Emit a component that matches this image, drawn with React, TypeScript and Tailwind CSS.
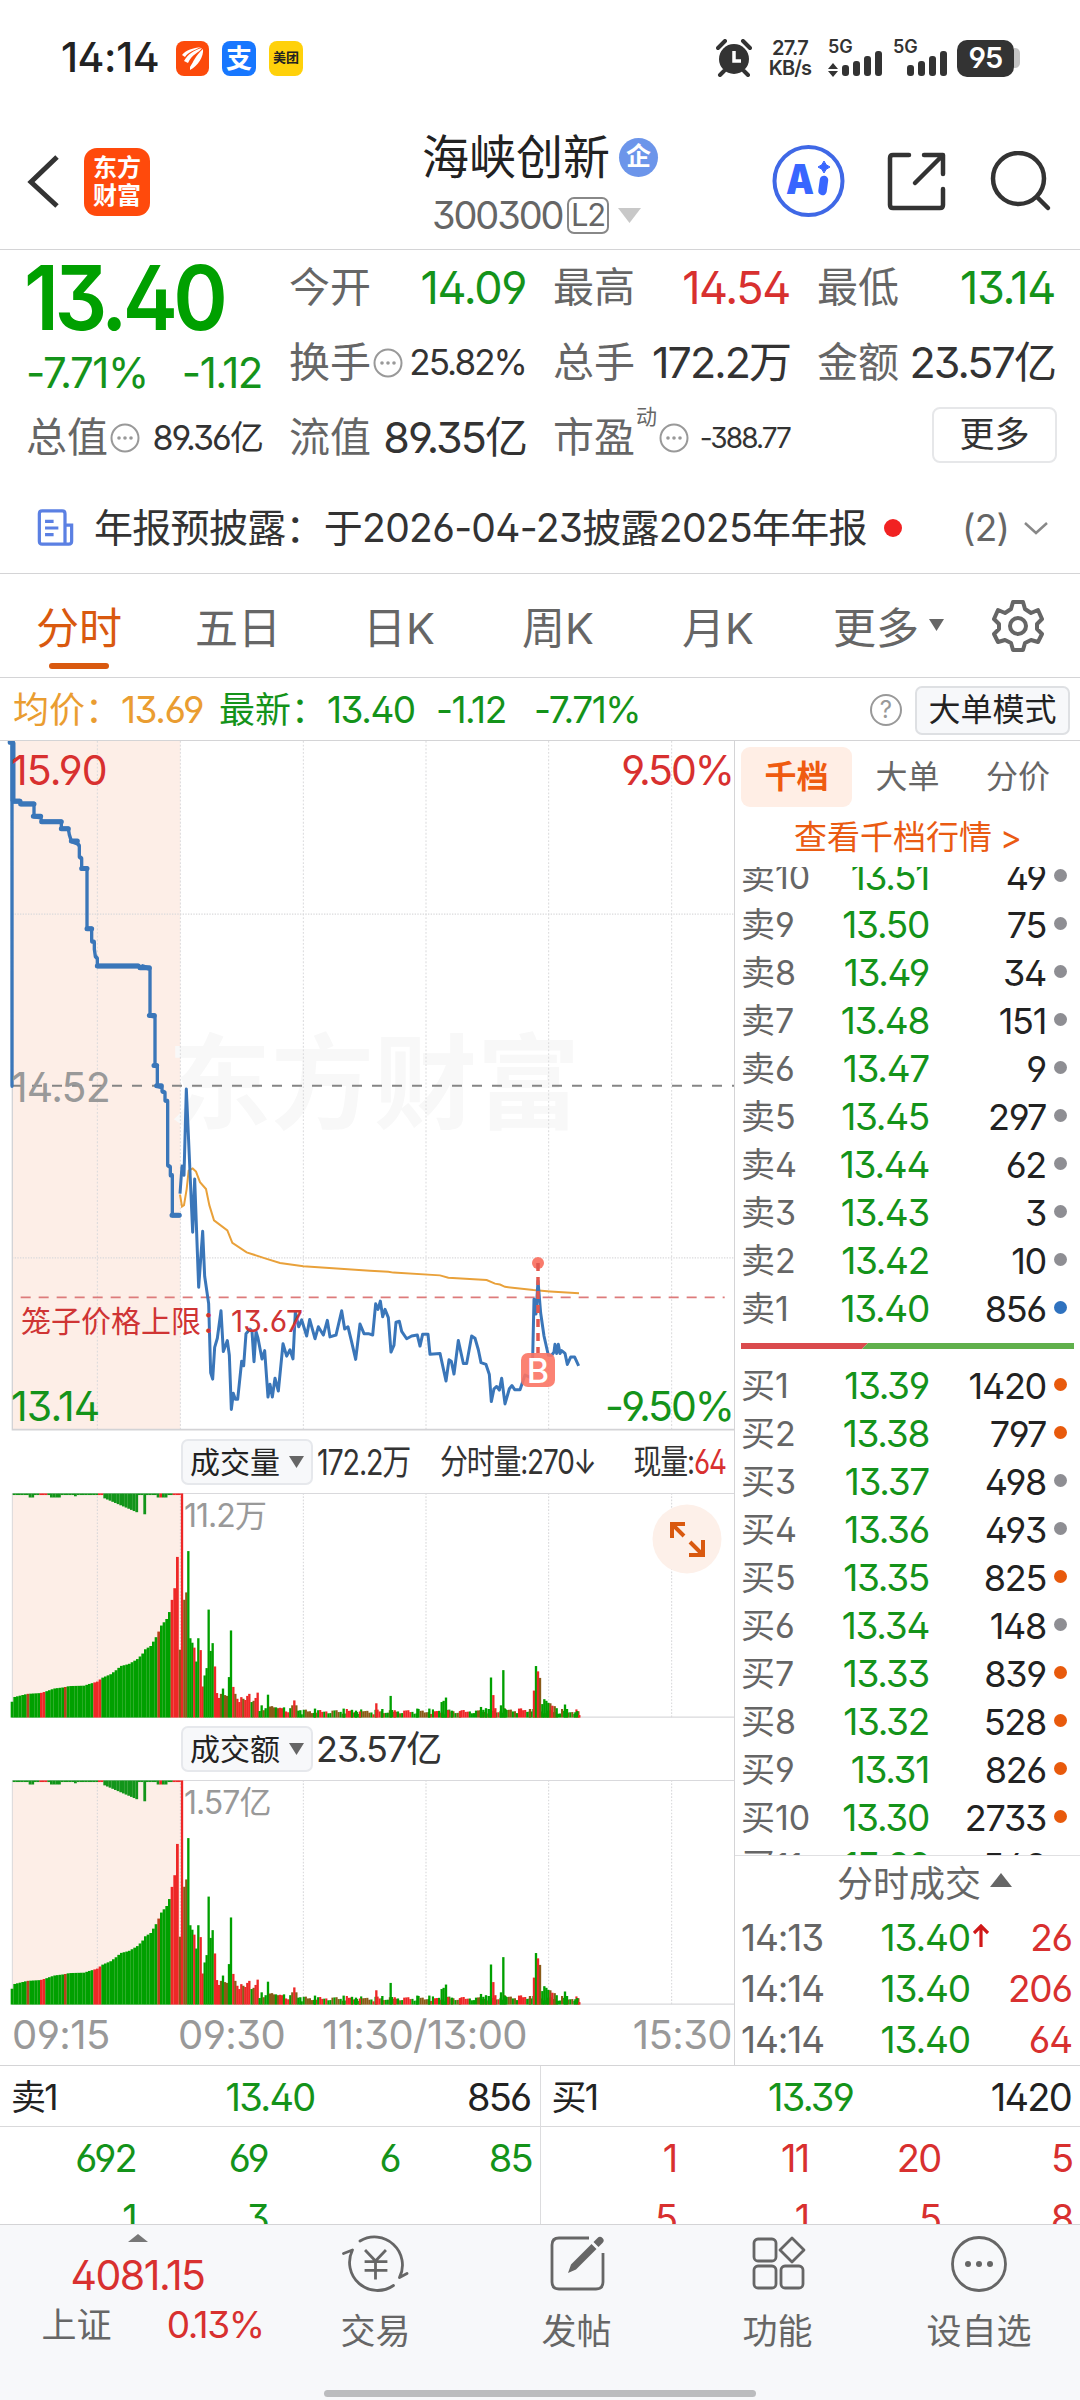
import { ReactNode } from "react";

const NAV_LABEL = "text-[35px] leading-[44px] text-[#666]";

type Row = [string, string, string, string];

const GRAY = "#8e8e93";
const BLUE = "#2f72bf";
const ORANGE = "#e85a0c";

const sells: Row[] = [
    ["卖10", "13.51", "49", GRAY],
    ["卖9", "13.50", "75", GRAY],
    ["卖8", "13.49", "34", GRAY],
    ["卖7", "13.48", "151", GRAY],
    ["卖6", "13.47", "9", GRAY],
    ["卖5", "13.45", "297", GRAY],
    ["卖4", "13.44", "62", GRAY],
    ["卖3", "13.43", "3", GRAY],
    ["卖2", "13.42", "10", GRAY],
    ["卖1", "13.40", "856", BLUE],
];

const buys: Row[] = [
    ["买1", "13.39", "1420", ORANGE],
    ["买2", "13.38", "797", ORANGE],
    ["买3", "13.37", "498", GRAY],
    ["买4", "13.36", "493", GRAY],
    ["买5", "13.35", "825", ORANGE],
    ["买6", "13.34", "148", GRAY],
    ["买7", "13.33", "839", ORANGE],
    ["买8", "13.32", "528", ORANGE],
    ["买9", "13.31", "826", ORANGE],
    ["买10", "13.30", "2733", ORANGE],
    ["买11", "13.29", "548", "transparent"],
];

const ticks = [
    { time: "14:13", price: "13.40", up: true, qty: "26" },
    { time: "14:14", price: "13.40", up: false, qty: "206" },
    { time: "14:14", price: "13.40", up: false, qty: "64" },
];

// Chart space: 3 units per pixel horizontally, top of the pane at y=24
const PREOPEN =
    "M36,775 L36,27 M28,27 L40,27 L40,155 L60,155 L62,161 L102,161 L102,188 L122,190 L125,200 L184,200 L184,215 L205,215 L208,228 L214,242 L232,247 L238,252 L238,276 L245,280 L245,302 L261,302 L261,433 L275,433 L275,460 L283,462 L283,477 L286,493 L292,498 L292,514 L415,514 L420,518 L428,515 L450,520 L450,622 L465,624 L465,731 L472,733 L472,775 L486,778 L486,787 L495,790 L495,807 L503,808 L503,948 L511,952 L511,970 L517,970 L517,1057 L540,1057";
const PREOPEN_STEPS =
    "M40,155 H60 M62,161 H102 M100,188 H122 M125,200 H184 M184,215 H205 M214,242 H232 M245,302 H261 M261,433 H275 M292,514 H415 M420,518 H448 M448,622 H463 M462,731 H470 M470,775 H484 M516,1057 H537";
const PRICE =
    "540,1010 546,950 552,970 559,782 578,1094 584,978 596,1214 608,1092 614,1190 626,1250 632,1400 638,1414 644,1345 652,1325 663,1265 670,1354 682,1330 688,1362 694,1480 700,1445 706,1458 713,1458 725,1375 731,1385 738,1315 750,1305 756,1310 762,1376 768,1310 774,1325 786,1370 794,1352 804,1453 810,1425 817,1453 825,1412 835,1440 849,1337 860,1364 870,1350 879,1370 886,1268 896,1300 905,1285 920,1320 929,1284 945,1326 955,1300 970,1318 982,1286 990,1322 1008,1318 1025,1265 1034,1305 1044,1300 1054,1330 1067,1371 1080,1294 1092,1315 1105,1315 1118,1318 1127,1250 1134,1262 1141,1244 1148,1278 1155,1262 1165,1280 1173,1355 1182,1340 1188,1290 1198,1288 1205,1310 1220,1326 1235,1320 1252,1318 1260,1342 1268,1316 1284,1316 1290,1360 1320,1358 1338,1418 1347,1372 1354,1375 1362,1403 1375,1330 1390,1380 1400,1380 1415,1320 1425,1325 1435,1350 1443,1378 1458,1382 1468,1404 1474,1463 1482,1435 1490,1430 1498,1438 1505,1412 1515,1468 1528,1435 1536,1428 1544,1437 1560,1437 1575,1405 1590,1410 1597,1400 1602,1240 1608,1272 1614,1200 1622,1270 1632,1320 1645,1362 1655,1362 1662,1355 1665,1338 1670,1358 1675,1338 1680,1358 1685,1352 1695,1358 1702,1382 1712,1366 1724,1366 1736,1385";
const AVERAGE =
    "540,1012 546,1038 552,1035 560,1000 566,960 578,955 588,962 600,985 618,1000 628,1035 642,1068 682,1090 697,1117 740,1138 800,1152 840,1161 910,1168 1110,1178 1165,1180 1180,1182 1320,1188 1345,1193 1460,1198 1485,1206 1500,1208 1515,1213 1600,1220 1650,1223 1737,1227";

const G = "#00a000";
const R = "#ee2727";
const M = "#8a5a17";

// [x, top] knots of the call-auction volume ramp
const ramp = [
    [32, 668], [40, 653], [60, 649], [80, 645], [120, 643], [136, 639], [160, 632], [190, 629], [205, 626],
    [250, 625], [265, 621], [290, 615], [304, 606], [330, 597], [345, 588], [360, 577], [385, 572], [410, 560],
    [425, 548], [432, 537], [450, 528], [465, 508], [472, 497], [480, 480], [490, 470], [500, 460], [508, 440],
    [516, 407], [524, 380], [532, 287],
];

// [x, top, colour] for the minutes that stand out from the base level
const spikes: [number, number, string][] = [
    [540, 537, M], [546, 155, R], [553, 415, M], [559, 397, M], [565, 296, G], [571, 509, G], [577, 520, G],
    [583, 532, R], [589, 566, G], [595, 509, G], [602, 538, R], [608, 627, R], [614, 600, G], [620, 582, G],
    [626, 439, G], [632, 540, G], [638, 521, G], [645, 578, R], [651, 643, R], [657, 655, R], [663, 645, M],
    [669, 632, G], [675, 648, M], [681, 650, M], [687, 604, G], [693, 490, G], [700, 628, R], [706, 645, M],
    [712, 657, R], [718, 665, R], [724, 653, R], [730, 657, M], [736, 660, R], [742, 650, R], [748, 645, R],
    [755, 665, G], [761, 662, M], [767, 655, R], [773, 642, R], [779, 687, G], [785, 673, G], [791, 685, M],
    [797, 680, G], [804, 647, G], [810, 676, M], [816, 675, M], [822, 678, M], [828, 678, G], [834, 680, M],
    [840, 679, R], [846, 680, R], [852, 678, G], [858, 688, R], [865, 690, R], [871, 680, G], [877, 673, M],
    [883, 661, R], [889, 673, M], [895, 686, G], [901, 685, G], [945, 681, G], [1031, 681, G], [1056, 684, G],
    [1068, 686, G], [1080, 688, R], [1129, 668, R], [1147, 682, G], [1172, 650, G], [1184, 685, R],
    [1252, 681, G], [1288, 681, G], [1325, 665, G], [1331, 662, G], [1338, 654, G], [1345, 685, R],
    [1356, 686, G], [1380, 687, R], [1443, 677, G], [1450, 684, G], [1458, 680, G], [1466, 682, G],
    [1473, 605, G], [1480, 648, R], [1486, 680, R], [1503, 673, G], [1510, 587, G], [1516, 682, G],
    [1590, 682, M], [1602, 637, R], [1608, 577, G], [1614, 590, R], [1620, 606, M], [1627, 670, G],
    [1633, 658, G], [1639, 662, G], [1645, 667, G], [1651, 668, M], [1657, 674, R], [1664, 675, M],
    [1670, 680, G], [1695, 671, G], [1701, 682, G], [1726, 690, G], [1732, 687, G], [1738, 697, R],
];

function rampTop(x: number) {
    for (let i = 1; i < ramp.length; i++) {
        if (x <= ramp[i][0]) {
            const [x0, y0] = ramp[i - 1];
            const [x1, y1] = ramp[i];
            return y0 + ((y1 - y0) * (x - x0)) / (x1 - x0);
        }
    }
    return 287;
}

function rampColor(x: number) {
    if (x >= 511 || (x >= 280 && x < 304) || (x >= 118 && x < 136)) return R;
    if ((x > 74 && x < 84) || (x > 186 && x < 196) || (x > 466 && x < 474)) return "#b8401c";
    return G;
}

function hanging(x: number) {
    if (x >= 304 && x < 412) return 10 + ((x - 304) / 108) * 38;
    if (x >= 424 && x < 432) return 51;
    if ((x > 84 && x < 100) || (x > 148 && x < 182) || (x > 468 && x < 496)) return 10;
    if (x > 216 && x < 230) return 7;
    return x < 536 ? 4 : 0;
}

function VolumeBars() {
    const bars: ReactNode[] = [];
    for (let i = 0; i < 63; i++) {
        const x = 32 + i * 8;
        bars.push(<rect key={`r${i}`} x={x} y={rampTop(x + 2)} width={8.3} height={703 - rampTop(x + 2)} fill={rampColor(x)} />);
        const red = (x > 110 && x < 136) || (x > 286 && x < 300) || (x > 466 && x < 476) || x > 508;
        bars.push(<rect key={`h${i}`} x={x + 6} y={155} width={8.4} height={hanging(x + 6)} fill={red ? R : "#12951a"} />);
    }
    for (let i = 0; i < 136; i++) {
        const x = 905 + i * 6.15;
        const h = 8 + ((i * 7) % 5) + (((i * 13) % 7) * 3) / 2 + (x > 1500 && x < 1600 ? 3 : 0);
        bars.push(<rect key={`b${i}`} x={x - 3} y={703 - h} width={6.4} height={h} fill={[G, R, M, G, R, G, M][(i * 3 + (i >> 2)) % 7]} />);
    }
    spikes.forEach(([x, y, c]) => bars.push(<rect key={`s${x}`} x={x - 3.5} y={y} width={7} height={703 - y} fill={c} />));
    return <>{bars}</>;
}

function VolumePane() {
    return (
        <svg className="block h-[225px] w-[734px]" viewBox="0 154 2202 550" preserveAspectRatio="none">
            <rect x="36" y="154" width="505" height="550" fill="#fdeee7" />
            <g stroke="#d6d6d8" strokeWidth="3" strokeDasharray="4 4">
                {[292, 541, 910, 1278, 1646, 2015].map((x) => (
                    <line key={x} x1={x} y1="154" x2={x} y2="704" />
                ))}
            </g>
            <path d="M36,155 H2202 M36,702 H2202 M37,155 V702" stroke="#d9d9dc" strokeWidth="3" fill="none" />
            <VolumeBars />
        </svg>
    );
}

function PriceChart() {
    return (
        <div className="relative h-[690px] w-[734px] overflow-hidden">
            <svg className="absolute inset-0 h-[690px] w-[734px]" viewBox="0 24 2202 1503" preserveAspectRatio="none">
                <rect x="36" y="24" width="505" height="1500" fill="#fdeee7" />
            </svg>
            <div className="absolute left-[168px] top-[268px] text-[103px] leading-[150px] font-bold text-[#f8f8f8]">东方财富</div>
            <svg className="absolute inset-0 h-[690px] w-[734px]" viewBox="0 24 2202 1503" preserveAspectRatio="none">
                <g stroke="#d9d9db" strokeWidth="3" strokeDasharray="4 4">
                    {[292, 541, 910, 1278, 1646, 2015].map((x) => (
                        <line key={x} x1={x} y1="24" x2={x} y2="1524" />
                    ))}
                    <line x1="36" y1="401" x2="2202" y2="401" />
                    <line x1="36" y1="1150" x2="2202" y2="1150" />
                </g>
                <path d="M37,24 V1524 H2202" stroke="#d3d3d6" strokeWidth="4" fill="none" />
                <line x1="36" y1="775" x2="2202" y2="775" stroke="#858585" strokeWidth="4" strokeDasharray="30 30" />
                <line x1="62" y1="1236" x2="2174" y2="1236" stroke="#dd7b7b" strokeWidth="3.5" strokeDasharray="30 24" />
                <polyline points={AVERAGE} fill="none" stroke="#e9a13a" strokeWidth="2" vectorEffect="non-scaling-stroke" />
                <path d={PREOPEN} fill="none" stroke="#3a76b9" strokeWidth="10" strokeLinejoin="round" strokeLinecap="round" />
                <path d={PREOPEN_STEPS} fill="none" stroke="#3a76b9" strokeWidth="5" strokeLinecap="round" vectorEffect="non-scaling-stroke" />
                <path d="M39,27 V155" fill="none" stroke="#3a76b9" strokeWidth="5" vectorEffect="non-scaling-stroke" />
                <polyline points={PRICE} fill="none" stroke="#3a76b9" strokeWidth="3" strokeLinejoin="round" vectorEffect="non-scaling-stroke" />
            </svg>
            <svg className="absolute inset-0 h-[690px] w-[734px]" viewBox="0 741 734 690">
                <circle cx="538" cy="1263" r="6" fill="#f97b6c" />
                <line x1="538" y1="1263" x2="538" y2="1353" stroke="#e2584f" strokeWidth="3.5" strokeDasharray="8 6" />
            </svg>
            <div className="absolute left-[521px] top-[612px] flex h-[34px] w-[34px] items-center justify-center rounded-[7px] bg-[#fb7464]/90 text-[34px] font-medium text-white">
                B
            </div>
            <span className="absolute left-[11px] top-[4px] text-[41px] leading-[50px] tracking-[-0.02em] text-[#d8302f]">15.90</span>
            <span className="absolute left-[11px] top-[321px] text-[41px] leading-[50px] tracking-[-0.02em] text-[#999]">14.52</span>
            <span className="absolute left-[11px] top-[640px] text-[41px] leading-[50px] tracking-[-0.02em] text-[#14931a]">13.14</span>
            <span className="absolute right-[1px] top-[4px] text-[41px] leading-[50px] tracking-[-0.05em] text-[#d8302f]">9.50%</span>
            <span className="absolute right-[1px] top-[640px] text-[41px] leading-[50px] tracking-[-0.05em] text-[#14931a]">-9.50%</span>
            <span className="absolute left-[21px] top-[559px] flex text-[30px] leading-[42px] whitespace-nowrap text-[#cf3434]">
                笼子价格上限：13.67
            </span>
        </div>
    );
}

function Signal() {
    return (
        <svg className="h-[26px] w-[41px]" viewBox="0 0 41 26" fill="#333">
            <rect x="0" y="14" width="7" height="11" rx="3" />
            <rect x="11" y="10" width="7" height="15" rx="3" />
            <rect x="22" y="5" width="7" height="20" rx="3" />
            <rect x="33" y="0" width="7" height="25" rx="3" />
        </svg>
    );
}

function StatusBar() {
    return (
        <div className="flex h-[116px] items-center justify-between pl-[61px] pr-[60px]">
            <div className="flex items-center">
                <span className="w-[115px] text-[41px] font-medium tracking-[-0.01em]">14:14</span>
                <svg className="h-[35px] w-[33px]" viewBox="0 0 33 35">
                    <rect width="33" height="35" rx="8" fill="#fc4a0b" />
                    <path d="M6 14C10 9 17 7 25 6C19 9 12 11 9 16ZM8 20C12 13 18 9 26 7C23 12 16 13 12 22ZM14 26C18 20 19 15 27 8C28 15 22 25 14 29Z" fill="#fff" />
                </svg>
                <div className="ml-[13px] flex h-[35px] w-[34px] items-center justify-center rounded-[8px] bg-[#1777ff] text-[26px] font-bold text-white">支</div>
                <div className="ml-[13px] flex h-[35px] w-[34px] items-center justify-center rounded-[8px] bg-[#ffd10a] text-[13px] font-bold">美团</div>
            </div>
            <div className="flex items-center text-[#333]">
                <svg className="h-[38px] w-[36px]" viewBox="0 0 36 38">
                    <circle cx="18" cy="20" r="15" fill="#333" />
                    <path d="M2 9L9 2M34 9L27 2M8 32L4 36M28 32L32 36" stroke="#333" strokeWidth="4" strokeLinecap="round" />
                    <path d="M18 12V22H25" stroke="#fff" strokeWidth="3.5" fill="none" />
                </svg>
                <div className="ml-[14px] w-[48px] text-center text-[20px] leading-[20px] font-semibold tracking-[-0.04em]">
                    27.7
                    <br />
                    KB/s
                </div>
                <div className="ml-[14px] h-[36px] w-[55px]">
                    <div className="text-[18px] leading-[14px] font-semibold">5G</div>
                    <div className="-mt-[3px] flex items-end gap-[4px]">
                        <svg className="h-[14px] w-[10px]" viewBox="0 0 10 14" fill="#333">
                            <path d="M5 0L10 6H0ZM5 14L0 8H10Z" />
                        </svg>
                        <Signal />
                    </div>
                </div>
                <div className="ml-[10px] h-[36px] w-[55px]">
                    <div className="text-[18px] leading-[14px] font-semibold">5G</div>
                    <div className="-mt-[3px] flex justify-end">
                        <Signal />
                    </div>
                </div>
                <div className="ml-[9px] flex h-[37px] w-[57px] items-center justify-center rounded-[10px] bg-[#333] text-[29px] font-semibold tracking-[-0.03em] text-white">95</div>
                <div className="h-[20px] w-[6px] rounded-r-[5px] bg-[#c4c4c4]" />
            </div>
        </div>
    );
}

function Header() {
    return (
        <div className="flex h-[134px] items-start border-b border-[#d4d4d6]">
            <svg className="ml-[24px] mt-[38px] h-[56px] w-[36px]" viewBox="0 0 36 56">
                <path d="M33 3L7 28L33 52" fill="none" stroke="#333" strokeWidth="5" />
            </svg>
            <div className="ml-[24px] mt-[32px] flex h-[68px] w-[66px] flex-col items-center justify-center rounded-[13px] bg-[#ff4a0c] text-[24px] leading-[28px] font-bold text-white">
                <span>东方</span>
                <span>财富</span>
            </div>
            <div className="ml-[250px] mt-[11px] flex w-[270px] flex-col items-center">
                <div className="flex h-[60px] items-center self-start pl-[22px]">
                    <span className="text-[47px] leading-[60px] text-[#222]">海峡创新</span>
                    <span className="ml-[9px] flex h-[39px] w-[39px] items-center justify-center rounded-full bg-[#6c95ea] text-[25px] font-bold text-white">企</span>
                </div>
                <div className="flex h-[56px] items-center self-start pl-[32px] text-[38px] text-[#666]">
                    <span className="w-[135px] tracking-[-0.055em]">300300</span>
                    <span className="flex h-[37px] w-[42px] items-center justify-center rounded-[7px] border-2 border-[#888] text-[31px] tracking-[-0.04em]">L2</span>
                    <svg className="ml-[9px] h-[15px] w-[23px]" viewBox="0 0 23 15">
                        <path d="M0 0H23L11.5 15Z" fill="#c8c8c8" />
                    </svg>
                </div>
            </div>
            <svg className="ml-[101px] mt-[28px] h-[74px] w-[74px]" viewBox="0 0 74 74">
                <circle cx="37.5" cy="37" r="34" fill="none" stroke="#3f68e6" strokeWidth="4" />
                <text x="15" y="50" textLength="28" lengthAdjust="spacingAndGlyphs" fontSize="41" fontWeight="900" fill="#3866ff">A</text>
                <path d="M53 36L51.5 47" stroke="#3866ff" strokeWidth="8.5" strokeLinecap="round" />
                <path d="M53 17Q54.5 21.500 59 23Q54.500 24.500 53 29Q51.500 24.500 47 23Q51.500 21.500 53 17Z" fill="#3866ff" stroke="#3866ff" strokeWidth="1" />
            </svg>
            <svg className="ml-[41px] mt-[35px] h-[62px] w-[62px]" viewBox="0 0 62 62" fill="none" stroke="#333" strokeWidth="4.5" strokeLinecap="round" strokeLinejoin="round">
                <path d="M23 4H7Q4 4 4 7V54Q4 57 7 57H54Q57 57 57 54V38" />
                <path d="M38 4H57V23M56 5L29 32" />
            </svg>
            <svg className="ml-[41px] mt-[35px] h-[62px] w-[64px]" viewBox="0 0 64 62" fill="none" stroke="#333" strokeWidth="4.5">
                <circle cx="29.5" cy="27.5" r="25.5" />
                <path d="M48 46L59 57" strokeLinecap="round" />
            </svg>
        </div>
    );
}

function Dots() {
    return (
        <svg className="ml-[2px] h-[30px] w-[30px]" viewBox="0 0 30 30">
            <circle cx="15" cy="15" r="13.5" fill="none" stroke="#999" strokeWidth="2" />
            <circle cx="9" cy="15" r="1.8" fill="#999" />
            <circle cx="15" cy="15" r="1.8" fill="#999" />
            <circle cx="21" cy="15" r="1.8" fill="#999" />
        </svg>
    );
}

function Cell({ label, extra, children }: { label: string; extra?: ReactNode; children: ReactNode }) {
    return (
        <div className="flex h-[75px] items-center justify-between whitespace-nowrap">
            <span className="flex items-center text-[41px] tracking-normal text-[#666]">
                {label}
                {extra}
            </span>
            {children}
        </div>
    );
}

function Quote() {
    return (
        <div className="grid h-[224px] grid-cols-[236px_237px_237px_238px] gap-x-[27px] pl-[26px] text-[43px] tracking-[-0.045em] text-[#333]">
            <div className="row-span-2 flex flex-col text-[#14931a]">
                <span className="-ml-[2px] mt-[2px] w-[240px] origin-left scale-x-[0.92] text-[90px] leading-[92px] font-semibold tracking-[-0.055em] text-[#00a000]">13.40</span>
                <span className="mt-[6px] flex justify-between text-[42px] leading-[46px] tracking-[-0.035em]">
                    <span>-7.71%</span>
                    <span>-1.12</span>
                </span>
            </div>
            <Cell label="今开"><span className="text-[45px] tracking-[-0.03em] text-[#14931a]">14.09</span></Cell>
            <Cell label="最高"><span className="text-[45px] tracking-[-0.03em] text-[#d8302f]">14.54</span></Cell>
            <Cell label="最低"><span className="text-[45px] tracking-[-0.03em] text-[#14931a]">13.14</span></Cell>
            <Cell label="换手" extra={<Dots />}><span className="text-[35px]">25.82%</span></Cell>
            <Cell label="总手"><span>172.2万</span></Cell>
            <Cell label="金额"><span>23.57亿</span></Cell>
            <Cell label="总值" extra={<Dots />}><span className="text-[34px]">89.36亿</span></Cell>
            <Cell label="流值"><span>89.35亿</span></Cell>
            <Cell label="市盈" extra={<><span className="-mt-[42px] ml-[1px] text-[21px]">动</span><Dots /></>}>
                <span className="text-[28px]">-388.77</span>
            </Cell>
            <div className="flex h-[75px] items-center justify-end">
                <span className="-mr-[2px] -mt-[6px] flex h-[56px] w-[125px] items-center justify-center rounded-[8px] border-2 border-[#e6e7e9] text-[35px] tracking-normal">更多</span>
            </div>
        </div>
    );
}

function News() {
    return (
        <div className="flex h-[100px] items-center border-b border-[#d4d4d6] pl-[37px] pt-[9px]">
            <svg className="h-[38px] w-[37px]" viewBox="0 0 38 40" fill="none" stroke="#5b80e3" strokeWidth="3.4">
                <path d="M29 37H5Q2 37 2 34V5Q2 2 5 2H26Q29 2 29 5V37H33Q36 37 36 34V17H29" />
                <path d="M8 13H17M8 20H22M8 27H17" />
            </svg>
            <span className="ml-[20px] w-[776px] text-[39px] leading-[50px] tracking-[-0.018em] whitespace-nowrap text-[#333]">
                年报预披露：于2026-04-23披露2025年年报
            </span>
            <span className="ml-[14px] h-[18px] w-[18px] rounded-full bg-[#f12222]" />
            <span className="ml-[60px] text-[37px] text-[#666] tracking-[-0.02em]">(2)</span>
            <svg className="ml-[14px] h-[14px] w-[26px]" viewBox="0 0 26 14" fill="none" stroke="#888" strokeWidth="2.5">
                <path d="M2 2L13 12L24 2" />
            </svg>
        </div>
    );
}

function Tabs() {
    return (
        <div className="flex h-[104px] items-center border-b border-[#d4d4d6] pt-[4px] text-[43px] leading-[50px] whitespace-nowrap text-[#666]">
            <span className="relative ml-[36px] w-[159px] text-[#d9590f]">
                分时
                <i className="absolute left-[13px] top-[60px] h-[6px] w-[60px] rounded-full bg-[#d9590f]" />
            </span>
            <span className="w-[168px]">五日</span>
            <span className="w-[159px]">日K</span>
            <span className="w-[160px]">周K</span>
            <span className="w-[151px]">月K</span>
            <span>更多</span>
            <svg className="-mt-[6px] ml-[10px] h-[12px] w-[15px]" viewBox="0 0 15 12">
                <path d="M0 0H15L7.5 12Z" fill="#666" />
            </svg>
            <svg className="-mt-[4px] ml-[48px] h-[54px] w-[52px]" viewBox="0 0 52 54" fill="none" stroke="#666" strokeWidth="4">
                <path d="M21 3H31L33 10L39 14L46 11L50 20L45 25V30L50 35L46 43L39 41L33 44L31 51H21L19 44L13 41L6 43L2 35L7 30V25L2 20L6 11L13 14L19 10Z" strokeLinejoin="round" />
                <circle cx="26" cy="27" r="8" />
            </svg>
        </div>
    );
}

function InfoBar() {
    return (
        <div className="flex h-[62px] items-center pl-[13px] pt-[2px] text-[37px] leading-[50px] tracking-[-0.04em] whitespace-nowrap text-[#14931a]">
            <span className="w-[108px] text-[36px] tracking-normal text-[#ea9d31]">均价：</span>
            <span className="w-[98px] text-[#ea9d31]">13.69</span>
            <span className="w-[108px] text-[36px] tracking-normal">最新：</span>
            <span className="w-[109px]">13.40</span>
            <span className="w-[98px]">-1.12</span>
            <span>-7.71%</span>
            <span className="ml-auto flex h-[32px] w-[32px] items-center justify-center rounded-full border-2 border-[#999] text-[24px] tracking-normal text-[#999]">?</span>
            <span className="ml-[13px] mr-[10px] flex h-[49px] w-[155px] items-center justify-center rounded-[7px] border-2 border-[#dee0e3] bg-[#f7f8fa] text-[32px] tracking-normal text-[#222]">大单模式</span>
        </div>
    );
}

function Book({ rows }: { rows: Row[] }) {
    return (
        <>
            {rows.map(([label, price, qty, dot]) => (
                <div key={label} className="flex h-[48px] shrink-0 items-center text-[37px] leading-[48px] tracking-[-0.035em] whitespace-nowrap">
                    <span className="w-[84px] pl-[6px] text-[34px] tracking-normal text-[#666]">{label}</span>
                    <span className="w-[110px] text-right text-[#14931a]">{price}</span>
                    <span className="w-[117px] text-right text-[36px] text-[#222]">{qty}</span>
                    <span className="mb-[4px] ml-[8px] h-[13px] w-[13px] rounded-full" style={{ background: dot }} />
                </div>
            ))}
        </>
    );
}

function PaneHeader({ title, children }: { title: string; children: ReactNode }) {
    return (
        <div className="flex h-[62px] items-center pl-[181px]">
            <span className="flex h-[46px] w-[132px] shrink-0 items-center justify-center gap-[9px] rounded-[7px] border-2 border-[#e6e8ec] bg-[#f7f8fa] text-[30px] leading-[40px] whitespace-nowrap text-[#222]">
                {title}
                <svg className="h-[12px] w-[15px]" viewBox="0 0 15 12">
                    <path d="M0 0H15L7.5 12Z" fill="#666" />
                </svg>
            </span>
            {children}
        </div>
    );
}

function LeftPane() {
    return (
        <div className="w-[735px] shrink-0 border-r border-[#d4d4d6]">
            <PriceChart />
            <PaneHeader title="成交量">
                <div className="ml-[4px] flex w-[512px] origin-left scale-x-[0.82] text-[35px] leading-[50px] tracking-[-0.04em] whitespace-nowrap text-[#333]">
                    <span className="w-[150px] shrink-0">172.2万</span>
                    <span className="w-[236px] shrink-0 text-[34px]">分时量:270↓</span>
                    <span className="text-[34px]">现量:<span className="text-[#d8302f]">64</span></span>
                </div>
            </PaneHeader>
            <div className="relative">
                <VolumePane />
                <span className="absolute left-[184px] top-[3px] text-[32px] leading-[40px] tracking-[-0.03em] text-[#999]">11.2万</span>
                <svg className="absolute left-[652px] top-[11px] h-[70px] w-[70px]" viewBox="0 0 70 70" fill="none" stroke="#d9590f" strokeWidth="4">
                    <circle cx="35" cy="35" r="34.5" fill="#fdf0e9" stroke="none" />
                    <path d="M20 34V20H33M21 21L32 32M51 36V51H37M50 50L38 38" />
                </svg>
            </div>
            <PaneHeader title="成交额">
                <span className="ml-[3px] text-[36px] leading-[50px] tracking-[-0.03em] text-[#333]">23.57亿</span>
            </PaneHeader>
            <div className="relative">
                <VolumePane />
                <span className="absolute left-[184px] top-[3px] text-[32px] leading-[40px] tracking-[-0.03em] text-[#999]">1.57亿</span>
            </div>
            <div className="flex h-[60px] items-center pl-[12px] pr-[2px] text-[40px] leading-[60px] tracking-[-0.015em] whitespace-nowrap text-[#999]">
                <span className="w-[166px]">09:15</span>
                <span className="w-[144px]">09:30</span>
                <span>11:30/13:00</span>
                <span className="ml-auto">15:30</span>
            </div>
        </div>
    );
}

function RightPane() {
    return (
        <div className="flex h-[1324px] w-[345px] flex-col">
            <div className="mt-[6px] flex h-[60px] items-center pl-[6px] text-[32px] text-[#666]">
                <span className="flex h-[60px] w-[111px] items-center justify-center rounded-[9px] bg-[#ffeee5] font-bold text-[#ef5b10]">千档</span>
                <span className="w-[111px] text-center">大单</span>
                <span className="w-[110px] text-center">分价</span>
            </div>
            <div className="flex h-[60px] items-center pl-[59px] pt-[2px] text-[33px] whitespace-nowrap text-[#ea5b12]">
                查看千档行情<span className="ml-[8px]">&gt;</span>
            </div>
            <div className="flex h-[988px] shrink-0 flex-col overflow-hidden">
                <div className="-mt-[14px]" />
                <Book rows={sells} />
                <div className="mt-[8px] mr-[6px] mb-[11px] ml-[6px] flex h-[10px] shrink-0 items-center">
                    <svg className="h-[6px] w-[333px]" viewBox="0 0 333 6">
                        <path d="M0 0H127L121 6H0Z" fill="#da4b4d" />
                        <path d="M127 0H333V6H121Z" fill="#60b04c" />
                    </svg>
                </div>
                <Book rows={buys} />
            </div>
            <div className="flex h-[57px] shrink-0 items-center border-t border-[#e0e0e2] pl-[102px] text-[36px] text-[#666]">
                分时成交
                <svg className="-mt-[8px] ml-[9px] h-[14px] w-[22px]" viewBox="0 0 22 14">
                    <path d="M0 14H22L11 0Z" fill="#666" />
                </svg>
            </div>
            {ticks.map((t, i) => (
                <div key={i} className="flex h-[51px] items-center text-[37px] leading-[51px] tracking-[-0.03em] text-[#666]">
                    <span className="w-[110px] pl-[6px]">{t.time}</span>
                    <span className="w-[125px] text-right text-[#14931a]">{t.price}</span>
                    <span className="flex w-[22px] justify-center">
                        {t.up && (
                            <svg className="-mt-[4px] h-[23px] w-[16px]" viewBox="0 0 16 23" fill="none" stroke="#d01818" strokeWidth="3.2">
                                <path d="M8 23V3M1 9L8 2L15 9" />
                            </svg>
                        )}
                    </span>
                    <span className="w-[80px] text-right text-[#d8302f]">{t.qty}</span>
                </div>
            ))}
        </div>
    );
}

function Queue({ side, price, total, lots, color }: { side: string; price: string; total: string; lots: string[]; color: string }) {
    return (
        <div className="h-[158px] w-[540px] overflow-hidden text-[38px] tracking-[-0.045em]">
            <div className="grid h-[61px] grid-cols-[140px_240px_1fr] items-center border-b border-[#d9d9db] pl-[11px] pr-[9px] pt-[2px] text-[#222]">
                <span className="text-[35px]">{side}</span>
                <span className="pr-[2px] text-center text-[#14931a]">{price}</span>
                <span className="text-right">{total}</span>
            </div>
            <div className={`grid auto-rows-[60px] grid-cols-[136px_132px_132px_132px] items-center pt-[1px] text-right ${color}`}>
                {lots.map((n, i) => (
                    <span key={i}>{n}</span>
                ))}
            </div>
        </div>
    );
}

function BottomNav() {
    return (
        <div className="relative flex h-[176px] border-t border-[#d4d4d6] bg-[#f7f8fa]">
            <div className="flex w-[275px] flex-col items-center">
                <svg className="mt-[9px] h-[8px] w-[20px]" viewBox="0 0 20 8">
                    <path d="M0 8H20L10 0Z" fill="#777" />
                </svg>
                <span className="mt-[8px] text-[41px] leading-[50px] tracking-[-0.035em] text-[#d8302f]">4081.15</span>
                <div className="ml-[30px] flex w-[222px] items-center justify-between text-[37px] leading-[50px] tracking-[-0.04em]">
                    <span className="text-[35px] tracking-normal text-[#666]">上证</span>
                    <span className="text-[#d8302f]">0.13%</span>
                </div>
            </div>
            <div className="flex w-[201px] flex-col items-center">
                <svg className="mt-[8px] h-[62px] w-[68px]" viewBox="0 0 68 62" fill="none" stroke="#666" strokeWidth="2.8" strokeLinecap="round" strokeLinejoin="round">
                    <path d="M18 8A28 28 0 0 1 57.500 44.500L65 40.500M51.500 52.500A28 28 0 0 1 10.500 17L1.500 20.500" />
                    <path d="M24 18L33.500 28L43 18M33.500 28.500V45M24 28.700H44M24 37.300H44" strokeLinecap="square" />
                </svg>
                <span className={`mt-[14px] ${NAV_LABEL}`}>交易</span>
            </div>
            <div className="flex w-[201px] flex-col items-center">
                <svg className="mt-[8px] h-[62px] w-[60px]" viewBox="0 0 60 62" fill="none" stroke="#666" strokeWidth="2.8">
                    <path d="M42 5H12Q5 5 5 12V49Q5 56 12 56H49Q56 56 56 49V20" />
                    <path d="M21 40L24 31.500L44.500 11L49.500 16L29 36.500ZM46.500 9L50.500 5A3.500 3.500 0 0 1 55.500 10L51.500 14Z" fill="#666" stroke="none" />
                </svg>
                <span className={`mt-[14px] ${NAV_LABEL}`}>发帖</span>
            </div>
            <div className="flex w-[201px] flex-col items-center">
                <svg className="mt-[9px] h-[60px] w-[56px]" viewBox="0 0 56 60" fill="none" stroke="#666" strokeWidth="2.8">
                    <rect x="4" y="5" width="22" height="22" rx="4" />
                    <rect x="4" y="32" width="22" height="22" rx="4" />
                    <rect x="31" y="32" width="22" height="22" rx="4" />
                    <path d="M42 4L54 16L42 28L30 16Z" strokeLinejoin="round" />
                </svg>
                <span className={`mt-[15px] ${NAV_LABEL}`}>功能</span>
            </div>
            <div className="flex w-[202px] flex-col items-center">
                <svg className="mt-[9px] h-[60px] w-[60px]" viewBox="0 0 60 60" fill="none" stroke="#666" strokeWidth="2.8">
                    <circle cx="30" cy="30" r="26.5" />
                    <g fill="#666" stroke="none">
                        <circle cx="19" cy="30" r="3" />
                        <circle cx="30" cy="30" r="3" />
                        <circle cx="41" cy="30" r="3" />
                    </g>
                </svg>
                <span className={`mt-[15px] ${NAV_LABEL}`}>设自选</span>
            </div>
            <div className="absolute bottom-[3px] left-[324px] h-[7px] w-[432px] rounded-full bg-[#bbbcbe]" />
        </div>
    );
}

export default function App() {
    return (
        <div className="h-[2400px] w-[1080px] overflow-hidden bg-white font-['Inter','Noto_Sans_CJK_SC',sans-serif] text-[#222] [font-feature-settings:'ss01']">
            <StatusBar />
            <Header />
            <Quote />
            <News />
            <Tabs />
            <InfoBar />
            <div className="flex h-[1326px] border-y border-[#d4d4d6]">
                <LeftPane />
                <RightPane />
            </div>
            <div className="flex h-[158px]">
                <Queue side="卖1" price="13.40" total="856" lots={["692", "69", "6", "85", "1", "3"]} color="text-[#14931a]" />
                <div className="h-[158px] w-[1px] shrink-0 bg-[#dcdcde]" />
                <Queue side="买1" price="13.39" total="1420" lots={["1", "11", "20", "5", "5", "1", "5", "8"]} color="text-[#d8302f]" />
            </div>
            <BottomNav />
        </div>
    );
}
